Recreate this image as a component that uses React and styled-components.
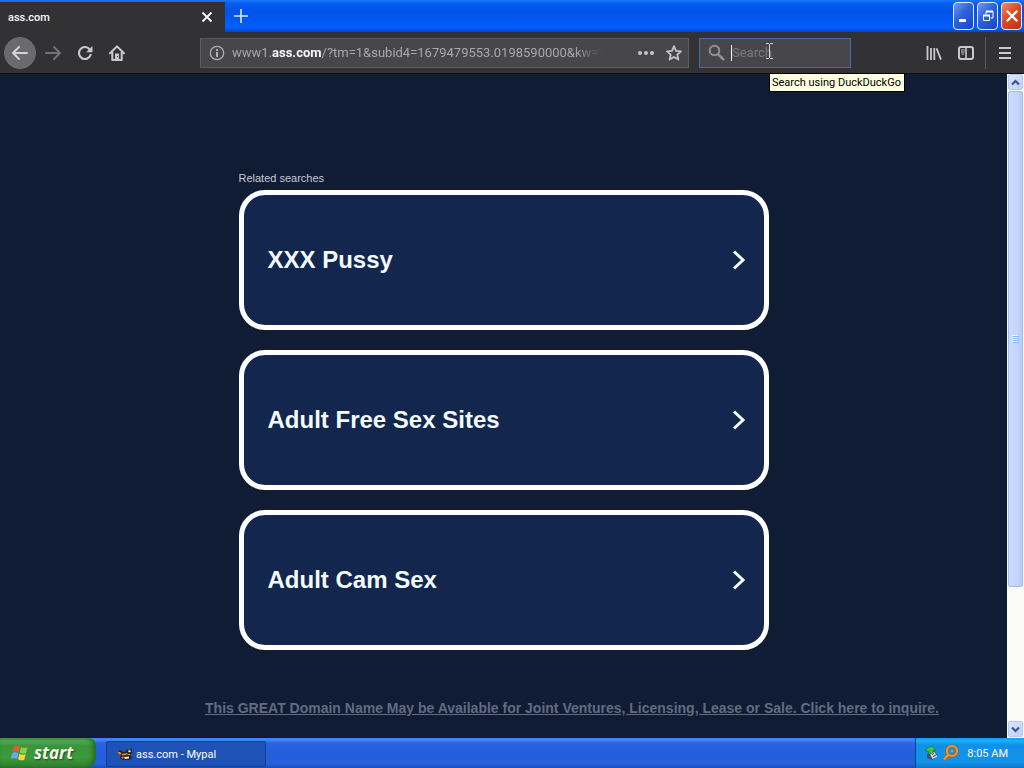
import React from "react";
import styled, { createGlobalStyle } from "styled-components";

const searches = ["XXX Pussy", "Adult Free Sex Sites", "Adult Cam Sex"];

const uiFont = `Roboto, "DejaVu Sans Condensed", sans-serif`;

const GlobalStyle = createGlobalStyle`
    * {
        box-sizing: border-box;
    }

    body {
        margin: 0;
        overflow: hidden;
        font-family: ${uiFont};
    }

    button {
        padding: 0;
        border: 0;
        background: none;
        color: inherit;
        font-family: inherit;
    }

    svg {
        display: block;
        flex: none;
    }
`;

function BackIcon() {
    return (
        <svg width="18" height="16" viewBox="0 0 18 16" fill="none" stroke="currentColor" strokeWidth="2" strokeLinecap="round" strokeLinejoin="round">
            <path d="M8 2 2 8l6 6M2 8h14" />
        </svg>
    );
}

function ForwardIcon() {
    return (
        <svg width="18" height="16" viewBox="0 0 18 16" fill="none" stroke="currentColor" strokeWidth="2" strokeLinecap="round" strokeLinejoin="round">
            <path d="m10 2 6 6-6 6M16 8H2" />
        </svg>
    );
}

function ReloadIcon() {
    return (
        <svg width="16" height="16" viewBox="0 0 16 16" fill="none" stroke="currentColor" strokeWidth="2.2">
            <path d="M12.6 4.2A6 6 0 1 0 13.6 10" strokeLinecap="round" />
            <path d="M15.5 1v6.2H9.2z" fill="currentColor" stroke="none" />
        </svg>
    );
}

function HomeIcon() {
    return (
        <svg width="16" height="16" viewBox="0 0 16 16" fill="none" stroke="currentColor" strokeWidth="2" strokeLinecap="round" strokeLinejoin="round">
            <path d="M1 8.2 8 1.4l7 6.8M3.300 7.500V15h9.400V7.500" />
            <path d="M6 14.500V8.500h4v6z" fill="currentColor" stroke="none" />
            <path d="M8.400 11.500h.2" stroke="#323234" strokeWidth="1" />
        </svg>
    );
}

function InfoIcon() {
    return (
        <svg width="16" height="16" viewBox="0 0 16 16" fill="none" stroke="#b1b1b3">
            <circle cx="8" cy="8" r="6.7" strokeWidth="1.2" />
            <path d="M8 7v5M8 4v2" strokeWidth="2" />
        </svg>
    );
}

function StarIcon() {
    return (
        <svg width="16" height="16" viewBox="0 0 16 16" fill="none" stroke="currentColor" strokeWidth="1.8" strokeLinejoin="round">
            <path d="m8 1.2 2 4.600 5 .5-3.700 3.300 1.100 5L8 12l-4.400 2.600 1.100-5L1 6.300l5-.5z" />
        </svg>
    );
}

function LoupeIcon() {
    return (
        <svg width="17" height="17" viewBox="0 0 17 17" fill="none" stroke="#929295">
            <circle cx="6.500" cy="6.500" r="4.800" strokeWidth="2" />
            <path d="m10.300 10.300 5 5" strokeWidth="2.600" strokeLinecap="round" />
        </svg>
    );
}

function LibraryIcon() {
    return (
        <svg width="16" height="16" viewBox="0 0 16 16" fill="none" stroke="currentColor" strokeWidth="1.8">
            <path d="M1.500 1v14M5 3v12M8.300 3v12M10.600 3.300 15 14.600" />
        </svg>
    );
}

function SidebarIcon() {
    return (
        <svg width="16" height="16" viewBox="0 0 16 16" fill="none" stroke="currentColor">
            <rect x="1" y="2" width="14" height="12" rx="2" strokeWidth="2" />
            <path d="M8 2v12" strokeWidth="1.600" />
            <path d="M3 5h3.500M3 7h3.500M3.500 9H6" />
        </svg>
    );
}

function MenuIcon() {
    return (
        <svg width="14" height="14" viewBox="0 0 14 14" stroke="currentColor" strokeWidth="2">
            <path d="M1 2h12M1 7h12M1 12h12" />
        </svg>
    );
}

function CloseIcon({ size, weight }) {
    return (
        <svg width={size} height={size} viewBox="0 0 12 12" stroke="currentColor" strokeWidth={weight}>
            <path d="m1.500 1.500 9 9M10.500 1.500l-9 9" />
        </svg>
    );
}

function FlagIcon() {
    return (
        <svg width="20" height="20" viewBox="0 0 20 20">
            <path d="M4 3.500c2-1.400 4-1 6 0L8.700 9c-2-1-4-1.200-6.200 0z" fill="#e8593a" />
            <path d="M11 4c2 1.200 4 1.300 6.500.3L16 10c-2.300 1-4.300.6-6.300-.5z" fill="#8cd14b" />
            <path d="M2.200 10.200c2-1.300 4.200-1 6.200 0L7 16c-2-1.200-4-1.300-6.200 0z" fill="#6da5f5" />
            <path d="M9.400 10.700c2 1.200 4 1.300 6.300.3L14.300 16.700c-2.300 1-4.300.7-6.300-.5z" fill="#fbd33c" />
        </svg>
    );
}

function MypalIcon() {
    return (
        <svg width="16" height="16" viewBox="0 0 16 16">
            <path d="M0 5.500 3 4l3 2 3-.5L10 3l2 1.500L15 2v5l-1.500 2 1.500 3-3 2H6l-3-2 1-3-3-1z" fill="#2b2219" />
            <path d="m0 5.500 3 .5 2 2-3 .5zM5 8l6-1-2 2-4 .5zM4 11l3-.5L6 13z" fill="#d9923e" />
            <path d="m11 5 2-1 1 1.500-2 1zM7 11l5-.5v2L8 13z" fill="#f6ead3" />
            <path d="M10.500 8.500h3" stroke="#d9923e" />
        </svg>
    );
}

function UsbIcon() {
    return (
        <svg width="16" height="18" viewBox="0 0 16 18">
            <path d="m3 10 7-4 4 6-6 4-5-2z" fill="#35566d" />
            <path d="m6 10 4-2.500 3.500 5-5 2.500z" fill="#c9d6d9" />
            <path d="m8 10.500 2-1M9 12.500l3-1.500" stroke="#375f68" />
            <path d="m1 6 6-4 5 4-3 .5V9L5 10V7.500z" fill="#42c63b" stroke="#18762b" strokeWidth=".6" />
        </svg>
    );
}

function TrayLoupeIcon() {
    return (
        <svg width="17" height="18" viewBox="0 0 17 18" fill="none">
            <circle cx="10" cy="7" r="5" stroke="#a55a1c" strokeWidth="3.200" />
            <path d="m6.500 10.500-4.500 5" stroke="#a55a1c" strokeWidth="3.600" />
            <circle cx="10" cy="7" r="5" stroke="#f8951f" strokeWidth="2.200" />
            <path d="m6.500 10.500-4.500 5" stroke="#f8951f" strokeWidth="2.400" />
            <circle cx="10" cy="7" r="1.300" fill="#f8951f" />
        </svg>
    );
}

function Arrow({ down }) {
    return (
        <svg width="9" height="7" viewBox="0 0 9 7" fill="none" stroke="#3f5486" strokeWidth="2.200">
            <path d={down ? "m1 1.500 3.500 3.500L8 1.500" : "M1 5.500 4.500 2 8 5.500"} />
        </svg>
    );
}

function TitleBar() {
    return (
        <TabStrip>
            <Tab>
                <span>ass.com</span>
                <TabClose aria-label="Close tab">
                    <CloseIcon size={12} weight={1.8} />
                </TabClose>
            </Tab>
            <NewTab aria-label="New tab">
                <svg width="14" height="14" viewBox="0 0 14 14" stroke="currentColor" strokeWidth="1.600">
                    <path d="M7 0v14M0 7h14" />
                </svg>
            </NewTab>
            <WindowButtons>
                <WindowButton aria-label="Minimize">
                    <svg width="14" height="14" viewBox="0 0 14 14">
                        <path d="M2 10h7v3H2z" fill="#fff" />
                    </svg>
                </WindowButton>
                <WindowButton aria-label="Restore">
                    <svg width="14" height="14" viewBox="0 0 14 14" fill="none" stroke="#fff">
                        <path d="M5 5V2.500h7V9H9.500" />
                        <path d="M5 2.500h7M2 6.500h7" strokeWidth="2" />
                        <path d="M2.500 6v5.500h6V6" />
                    </svg>
                </WindowButton>
                <WindowButton $close aria-label="Close">
                    <CloseIcon size={14} weight={2} />
                </WindowButton>
            </WindowButtons>
        </TabStrip>
    );
}

function Toolbar() {
    return (
        <NavBar>
            <BackButton aria-label="Back">
                <BackIcon />
            </BackButton>
            <ToolButton $dim aria-label="Forward">
                <ForwardIcon />
            </ToolButton>
            <ToolButton aria-label="Reload">
                <ReloadIcon />
            </ToolButton>
            <ToolButton aria-label="Home">
                <HomeIcon />
            </ToolButton>
            <Spacer />
            <AddressBar>
                <InfoIcon />
                <Address>
                    www1.<b>ass.com</b>/?tm=1&amp;subid4=1679479553.0198590000&amp;kw=\
                </Address>
                <FieldButton aria-label="Page actions">
                    <svg width="16" height="4" viewBox="0 0 16 4" fill="currentColor">
                        <circle cx="2" cy="2" r="2" />
                        <circle cx="8" cy="2" r="2" />
                        <circle cx="14" cy="2" r="2" />
                    </svg>
                </FieldButton>
                <FieldButton aria-label="Bookmark this page">
                    <StarIcon />
                </FieldButton>
            </AddressBar>
            <SearchBox>
                <LoupeIcon />
                <Caret />
                <SearchInput type="text" placeholder="Search" aria-label="Search" />
                <Pointer width="7" height="16" viewBox="0 0 7 16" fill="none" stroke="#d8d8d8">
                    <path d="M0 .5h2.500l1 1 1-1H7M3.500 1v14M0 15.500h2.500l1-1 1 1H7" />
                </Pointer>
                <Tooltip role="tooltip">Search using DuckDuckGo</Tooltip>
            </SearchBox>
            <Spacer />
            <ToolButton aria-label="Library">
                <LibraryIcon />
            </ToolButton>
            <ToolButton aria-label="Sidebars">
                <SidebarIcon />
            </ToolButton>
            <Divider />
            <ToolButton aria-label="Menu">
                <MenuIcon />
            </ToolButton>
        </NavBar>
    );
}

function Scrollbar() {
    return (
        <ScrollTrack>
            <ScrollButton aria-label="Scroll up">
                <Arrow />
            </ScrollButton>
            <Thumb>
                <svg width="7" height="8" viewBox="0 0 7 8" stroke="#eef4fe">
                    <path d="M0 .5h6M0 2.500h6M0 4.500h6M0 6.500h6" />
                    <path d="M1 1.500h6M1 3.500h6M1 5.500h6M1 7.500h6" stroke="#8cb0f8" />
                </svg>
            </Thumb>
            <ScrollRest />
            <ScrollButton aria-label="Scroll down">
                <Arrow down />
            </ScrollButton>
        </ScrollTrack>
    );
}

function Taskbar() {
    return (
        <Bar>
            <StartButton>
                <FlagIcon />
                start
            </StartButton>
            <TaskButton>
                <MypalIcon />
                ass.com - Mypal
            </TaskButton>
            <Tray>
                <UsbIcon />
                <TrayLoupeIcon />
                <Clock>8:05 AM</Clock>
            </Tray>
        </Bar>
    );
}

export default function App() {
    return (
        <Screen>
            <GlobalStyle />
            <TitleBar />
            <Toolbar />
            <Viewport>
                <Page>
                    <Related>
                        <Heading>Related searches</Heading>
                        {searches.map((name) => (
                            <Card href="#" key={name}>
                                {name}
                                <svg width="14" height="20" viewBox="0 0 14 20" fill="none" stroke="currentColor" strokeWidth="3">
                                    <path d="m2 1.500 9 8.500-9 8.500" />
                                </svg>
                            </Card>
                        ))}
                    </Related>
                    <Inquire href="#">
                        This GREAT Domain Name May be Available for Joint Ventures, Licensing, Lease or Sale. Click here to inquire.
                    </Inquire>
                </Page>
                <Scrollbar />
            </Viewport>
            <Taskbar />
        </Screen>
    );
}

const Screen = styled.div`
    height: 100vh;
    display: grid;
    grid-template-rows: auto auto 1fr auto;
    background: #101b34;
`;

const TabStrip = styled.header`
    display: flex;
    height: 32px;
    background: linear-gradient(#1c76f8 0, #0560f3 3px, #0053e6 10px, #0058f0 20px, #0560fb 27px, #0045cf 32px);
`;

const Tab = styled.div`
    width: 225px;
    margin-top: 2px;
    padding: 0 12px 0 8px;
    display: flex;
    align-items: center;
    justify-content: space-between;
    background: #323234;
    color: #f9f9fa;
    font-size: 11px;
    font-weight: 500;
`;

const TabClose = styled.button`
    color: #f9f9fa;
`;

const NewTab = styled.button`
    width: 32px;
    display: flex;
    align-items: center;
    justify-content: center;
    color: #d9e7fd;
`;

const WindowButtons = styled.div`
    margin-left: auto;
    padding: 2px 2px 2px 0;
    display: flex;
    gap: 3px;
`;

const WindowButton = styled.button`
    width: 21px;
    height: 28px;
    display: flex;
    align-items: center;
    justify-content: center;
    border: 1px solid #e4ebfb;
    border-radius: 4px;
    color: #fff;
    background: ${(props) =>
        props.$close
            ? "linear-gradient(135deg, #ee8b6c, #dd4a25 45%, #bd3211)"
            : "linear-gradient(135deg, #6f98f3, #2b62dc 45%, #1747bd)"};
`;

const NavBar = styled.nav`
    display: flex;
    align-items: center;
    height: 42px;
    padding: 0 3px 0 4px;
    background: #323234;
    border-bottom: 1px solid #0c0e16;
    color: #c4c4c6;
`;

const ToolButton = styled.button`
    width: 32px;
    height: 32px;
    display: flex;
    align-items: center;
    justify-content: center;
    color: ${(props) => (props.$dim ? "#737375" : "#c9c9cb")};
`;

const BackButton = styled(ToolButton)`
    margin-right: 1px;
    border: 1px solid #727274;
    border-radius: 50%;
    background: #6a6a6c;
    color: #d5d5d6;
`;

const Spacer = styled.div`
    flex: 0 1 67px;
`;

const Field = styled.div`
    height: 30px;
    display: flex;
    align-items: center;
    background: #474749;
    font-size: 13px;
`;

const AddressBar = styled(Field)`
    flex: 1;
    min-width: 0;
    padding: 0 6px 0 8px;
    border: 1px solid #5d5d5f;
    color: #a9a9ab;
`;

const Address = styled.div`
    flex: 1;
    min-width: 0;
    margin: 0 36px 0 7px;
    overflow: hidden;
    white-space: nowrap;
    mask-image: linear-gradient(to left, transparent, #000 28px);

    b {
        color: #f9f9fa;
        font-weight: 700;
    }
`;

const FieldButton = styled.button`
    margin-left: 12px;
    color: #c4c4c6;

    &:first-of-type {
        margin-left: 0;
    }
`;

const SearchBox = styled(Field)`
    position: relative;
    width: 152px;
    margin-left: 10px;
    padding-left: 8px;
    border: 1px solid #4769b3;
`;

const Caret = styled.span`
    width: 1px;
    height: 16px;
    margin-left: 6px;
    background: #f9f9fa;
`;

const SearchInput = styled.input`
    flex: 1;
    min-width: 0;
    padding: 0;
    border: 0;
    outline: 0;
    background: none;
    color: #f9f9fa;
    font: 13px ${uiFont};

    &::placeholder {
        color: #79797b;
    }
`;

const Pointer = styled.svg`
    position: absolute;
    left: 66px;
    top: 4px;
`;

const Tooltip = styled.div`
    position: absolute;
    z-index: 1;
    left: 69px;
    top: 34px;
    padding: 0 3px 0 2px;
    border: 1px solid #000;
    background: #ffffe1;
    color: #000;
    font-size: 11px;
    line-height: 17px;
    white-space: nowrap;
`;

const Divider = styled.span`
    width: 1px;
    height: 32px;
    margin: 0 3px;
    background: #58585a;
`;

const Viewport = styled.div`
    display: flex;
    min-height: 0;
`;

const Page = styled.main`
    flex: 1;
    overflow: hidden;
    padding-top: 96px;
    display: flex;
    flex-direction: column;
    align-items: center;
    font-family: "Liberation Sans", Arial, sans-serif;
`;

const Related = styled.section`
    width: 530px;
    max-width: 100%;
    display: flex;
    flex-direction: column;
    gap: 20px;
`;

const Heading = styled.h2`
    margin: 0 0 -16px;
    color: #c5cbd8;
    font-size: 11px;
    font-weight: 400;
    line-height: 16px;
`;

const Card = styled.a`
    height: 140px;
    padding: 0 18px 0 24px;
    display: flex;
    align-items: center;
    justify-content: space-between;
    border: 5px solid #fff;
    border-radius: 26px;
    background: #12264e;
    color: #f3fbff;
    font-size: 24px;
    font-weight: 700;
    line-height: 30px;
    text-decoration: none;
`;

const Inquire = styled.a`
    margin: 50px 0 0 137px;
    color: #626b80;
    font-size: 14px;
    font-weight: 700;
    line-height: 16px;
    white-space: nowrap;
`;

const ScrollTrack = styled.div`
    width: 17px;
    padding: 0 1px 1px;
    display: flex;
    flex-direction: column;
    gap: 1px;
    background: #fbfbf8;
`;

const ScrollButton = styled.button`
    height: 16px;
    display: flex;
    align-items: center;
    justify-content: center;
    border: 1px solid #b4c8f6;
    border-radius: 2px;
    background: linear-gradient(135deg, #dbe6ff, #bccffb);
`;

const Thumb = styled.div`
    flex: 496;
    display: flex;
    align-items: center;
    justify-content: center;
    border: 1px solid #a4b9ee;
    border-radius: 2px;
    background: linear-gradient(to right, #cddafe, #c6d5fd 60%, #b8cbf8);
`;

const ScrollRest = styled.div`
    flex: 132;
`;

const Bar = styled.footer`
    height: 30px;
    display: flex;
    background: linear-gradient(#3a80f0 0, #4088f2 2px, #2a64e0 5px, #245edb 16px, #2562dd 26px, #1d4cb5 30px);
    color: #fff;
    font-size: 11px;
`;

const StartButton = styled.button`
    width: 96px;
    padding: 0 0 1px 10px;
    display: flex;
    align-items: center;
    gap: 4px;
    border-radius: 0 8px 10px 0;
    background: linear-gradient(#5aa55a 0, #4fb04f 3px, #3c943c 8px, #3b9a3a 20px, #2f7c2f 30px);
    box-shadow: inset -3px 0 5px #22692a;
    color: #f4f8ec;
    font: italic 700 17px "Open Sans", sans-serif;
    text-shadow: 1px 1px 2px #1f4a1f;
`;

const TaskButton = styled.button`
    width: 160px;
    height: 26px;
    margin: 3px 0 0 10px;
    padding-left: 10px;
    display: flex;
    align-items: center;
    gap: 3px;
    border: 1px solid #173c92;
    border-radius: 2px;
    background: #1e52b7;
    color: #fff;
    font-size: 11px;
`;

const Tray = styled.div`
    margin-left: auto;
    padding: 0 16px 0 8px;
    display: flex;
    align-items: center;
    gap: 2px;
    border-left: 1px solid #0d3c9c;
    background: linear-gradient(#1b9cf0 0, #19b0f5 3px, #1290e8 7px, #1293ea 24px, #0f74c6 30px);
`;

const Clock = styled.time`
    margin-left: 6px;
`;
